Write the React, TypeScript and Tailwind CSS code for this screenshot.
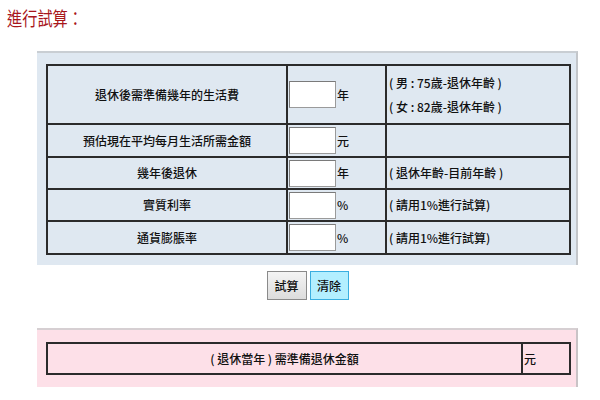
import React from 'react';

type Row = {
  label: string;
  unit: string;
  notes: string[];
  height: string;
};

const rows: Row[] = [
  {
    label: '退休後需準備幾年的生活費',
    unit: '年',
    notes: ['( 男 : 75歲-退休年齡 )', '( 女 : 82歲-退休年齡 )'],
    height: 'h-[59px]',
  },
  { label: '預估現在平均每月生活所需金額', unit: '元', notes: [], height: 'h-[33px]' },
  { label: '幾年後退休', unit: '年', notes: ['( 退休年齡-目前年齡 )'], height: 'h-[32px]' },
  { label: '實質利率', unit: '%', notes: ['( 請用1%進行試算)'], height: 'h-[32px]' },
  { label: '通貨膨脹率', unit: '%', notes: ['( 請用1%進行試算)'], height: 'h-[33px]' },
];

const cell = 'border-2 border-[#2b2b2b] p-0';

function InputRow({ row }: { row: Row }) {
  return (
    <tr className={row.height}>
      <td className={`${cell} w-[240px] text-center`}>{row.label}</td>
      <td className={`${cell} w-[99px]`}>
        <div className="flex items-center pl-[1px]">
          <input
            type="text"
            className="w-[47px] h-[27px] bg-white border border-[#9a9a9a] border-t-[#7a7a7a] border-l-[#7a7a7a] outline-none"
          />
          <span className="ml-[1px]">{row.unit}</span>
        </div>
      </td>
      <td className={`${cell} pl-[2px]`}>
        <div className="flex flex-col gap-[8px]">
          {row.notes.map((n) => (
            <span key={n}>{n}</span>
          ))}
        </div>
      </td>
    </tr>
  );
}

export default function App() {
  return (
    <div
      className="w-[600px] h-[400px] bg-white overflow-hidden text-[12px] font-medium text-[#111]"
      style={{ fontFamily: '"Noto Sans CJK TC", "Liberation Sans", sans-serif' }}
    >
      <div className="h-[51px] pl-[7px] pt-[5px]">
        <h2 className="inline-block origin-left scale-x-[0.8] text-[19px] leading-[26px] font-normal text-[#a8161b]">
          進行試算：
        </h2>
      </div>

      <div className="ml-[37px] w-[541px] h-[214px] bg-[#dfe8f1] border-t-2 border-t-[#c9ced3] border-r-2 border-r-[#c3c6ca] pl-[9px] pt-[11px]">
        <table className="border-collapse w-[525px] leading-[16px]">
          <tbody>
            {rows.map((row) => (
              <InputRow key={row.label} row={row} />
            ))}
          </tbody>
        </table>
      </div>

      <div className="ml-[37px] w-[541px] flex justify-center gap-[3px] pt-[6px]">
        <button className="w-[40px] h-[29px] border border-[#8a8a8a] bg-gradient-to-b from-[#f4f4f4] to-[#dcdcdc] text-[12px]">
          試算
        </button>
        <button className="w-[39px] h-[29px] border border-[#3aaee0] bg-[#b3efff] text-[12px]">
          清除
        </button>
      </div>

      <div className="ml-[37px] mt-[28px] w-[541px] h-[59px] bg-[#fde0e8] border-t-2 border-t-[#d6cfd2] border-r-2 border-r-[#c9c3c6] pl-[9px] pt-[12px]">
        <table className="border-collapse w-[525px]">
          <tbody>
            <tr className="h-[31px]">
              <td className={`${cell} text-center`}>( 退休當年 ) 需準備退休金額</td>
              <td className={`${cell} w-[48px] pl-[1px]`}>元</td>
            </tr>
          </tbody>
        </table>
      </div>
    </div>
  );
}
